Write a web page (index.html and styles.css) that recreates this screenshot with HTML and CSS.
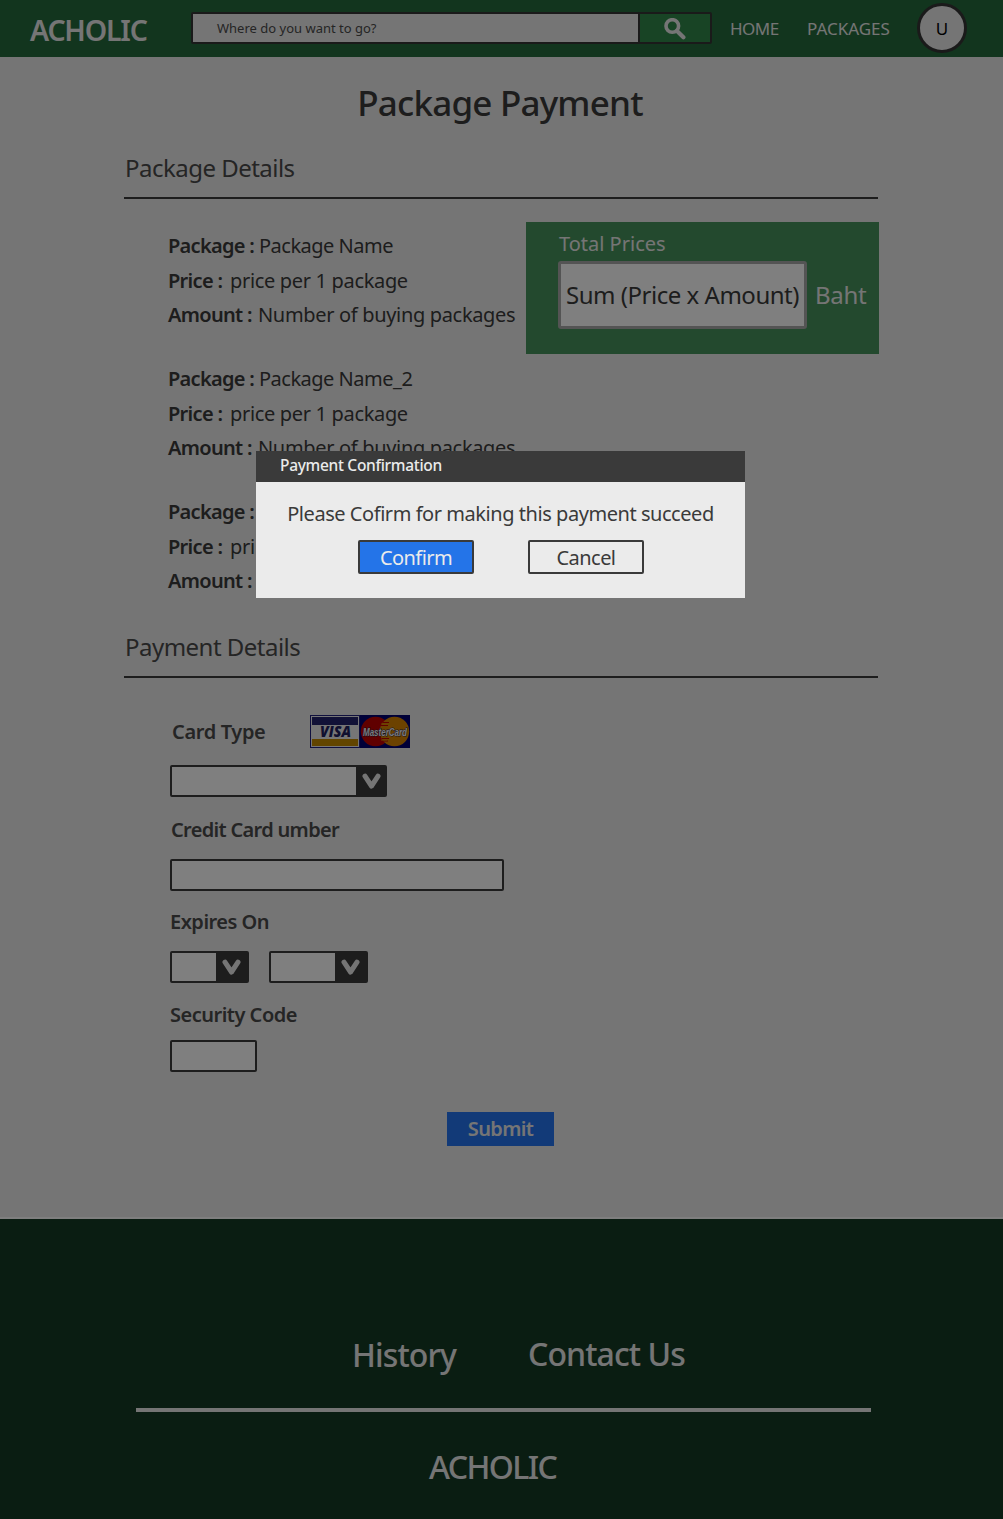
FILE: index.html
```html
<!DOCTYPE html>
<html lang="en">
<head>
<meta charset="utf-8">
<title>Package Payment</title>
<link rel="stylesheet" href="styles.css">
</head>
<body>
<header class="topbar">
  <div class="brand">ACHOLIC</div>
  <div class="search">
    <div class="search-input">Where do you want to go?</div>
    <div class="search-button">
      <svg width="22" height="22" viewBox="0 0 22 22"><circle cx="8.3" cy="8" r="6.3" fill="none" stroke="#ebebeb" stroke-width="3.6"/><path d="M13 13l6.4 6.2" stroke="#ebebeb" stroke-width="4.2" stroke-linecap="round"/></svg>
    </div>
  </div>
  <nav class="nav"><span class="nav-home">HOME</span><span class="nav-packages">PACKAGES</span></nav>
  <div class="avatar">U</div>
</header>

<main class="page">
  <h1 class="title">Package Payment</h1>
  <h2 class="section-title">Package Details</h2>
  <div class="summary">
    <div class="packages">
      <div class="package">
        <div class="line"><b class="k-package">Package :</b><span class="v-name">Package Name</span></div>
        <div class="line"><b class="k-price">Price :</b><span class="v-price">price per 1 package</span></div>
        <div class="line"><b class="k-amount">Amount :</b><span class="v-amount">Number of buying packages</span></div>
      </div>
      <div class="package">
        <div class="line"><b class="k-package">Package :</b><span class="v-name">Package Name_2</span></div>
        <div class="line"><b class="k-price">Price :</b><span class="v-price">price per 1 package</span></div>
        <div class="line"><b class="k-amount">Amount :</b><span class="v-amount">Number of buying packages</span></div>
      </div>
      <div class="package">
        <div class="line"><b class="k-package">Package :</b></div>
        <div class="line"><b class="k-price">Price :</b><span class="v-price">pri</span></div>
        <div class="line"><b class="k-amount">Amount :</b></div>
      </div>
    </div>
    <div class="total">
      <div class="total-label">Total Prices</div>
      <div class="total-row">
        <div class="total-box">Sum (Price x Amount)</div>
        <div class="total-unit">Baht</div>
      </div>
    </div>
  </div>

  <h2 class="section-title payment-title">Payment Details</h2>
  <div class="form">
    <div class="card-row">
      <span class="label card-label">Card Type</span>
      <svg class="cards" width="100" height="33" viewBox="0 0 100 33">
        <rect width="50" height="33" fill="#20207c"/>
        <rect x="1" y="1" width="48" height="31" fill="#ececec"/>
        <rect x="2" y="2" width="46" height="8" fill="#25256f"/>
        <rect x="2" y="24" width="46" height="7" fill="#c48a00"/>
        <text x="10" y="22" class="visa" textLength="31" lengthAdjust="spacingAndGlyphs">VISA</text>
        <rect x="50" width="50" height="33" fill="#000070"/>
        <circle cx="65.5" cy="16.5" r="14.7" fill="#c00000"/>
        <circle cx="84.5" cy="16.5" r="14.7" fill="#d88400"/>
        <path d="M73 7.500h6M71 10.500h7M72 23.500h7M73 26h5" stroke="#c00000" stroke-width="1.200"/>
        <path d="M71 9h6M71 25h6" stroke="#d88400" stroke-width="1"/>
        <text x="53" y="20.500" class="mc" textLength="44" lengthAdjust="spacingAndGlyphs">MasterCard</text>
      </svg>
    </div>
    <div class="select select-type"><span class="arrow"><svg width="19" height="17" viewBox="0 0 19 17"><path d="M3 3.200L9.500 13L16 3.200" fill="none" stroke="#ebebeb" stroke-width="5" stroke-linecap="round" stroke-linejoin="round"/></svg></span></div>
    <div class="label number-label">Credit Card umber</div>
    <div class="field field-number"></div>
    <div class="label expires-label">Expires On</div>
    <div class="expires">
      <div class="select select-month"><span class="arrow"><svg width="19" height="17" viewBox="0 0 19 17"><path d="M3 3.200L9.500 13L16 3.200" fill="none" stroke="#ebebeb" stroke-width="5" stroke-linecap="round" stroke-linejoin="round"/></svg></span></div>
      <div class="select select-year"><span class="arrow"><svg width="19" height="17" viewBox="0 0 19 17"><path d="M3 3.200L9.500 13L16 3.200" fill="none" stroke="#ebebeb" stroke-width="5" stroke-linecap="round" stroke-linejoin="round"/></svg></span></div>
    </div>
    <div class="label security-label">Security Code</div>
    <div class="field field-code"></div>
  </div>
  <div class="submit">Submit</div>
</main>

<footer class="footer">
  <div class="footer-links"><span class="history">History</span><span class="contact">Contact Us</span></div>
  <div class="footer-brand">ACHOLIC</div>
</footer>

<div class="overlay">
  <div class="modal">
    <div class="modal-title">Payment Confirmation</div>
    <div class="modal-text">Please Cofirm for making this payment succeed</div>
    <div class="modal-actions">
      <div class="btn btn-primary">Confirm</div>
      <div class="btn">Cancel</div>
    </div>
  </div>
</div>
</body>
</html>
```

FILE: styles.css
```css
* { box-sizing: border-box; }
body {
  margin: 0;
  width: 1003px;
  height: 1519px;
  overflow: hidden;
  background: #ebebeb;
  color: #3a3a3a;
  font-family: "Noto Sans", "Open Sans", sans-serif;
  font-size: 20px;
  white-space: nowrap;
}
.topbar {
  display: flex;
  height: 57px;
  padding-left: 30px;
  background: #246a3c;
  color: #ebebeb;
}
.brand {
  width: 161px;
  font-size: 28.5px;
  font-weight: 600;
  letter-spacing: -1.2px;
  line-height: 60px;
}
.search {
  display: flex;
  width: 521px;
  height: 32px;
  margin-top: 12px;
  border: 2px solid #343434;
  border-radius: 2px;
}
.search-input {
  width: 445px;
  padding-left: 24px;
  background: #ebebeb;
  color: #4a4a4a;
  font-size: 13px;
  line-height: 29px;
}
.search-button {
  flex: 1;
  padding: 4px 0 0 24px;
  border-left: 2px solid #343434;
  background: #30884a;
}
.search-button svg { display: block; }
.nav { display: flex; font-size: 17px; line-height: 58px; }
.nav-home { width: 77px; margin-left: 18px; letter-spacing: -0.5px; }
.nav-packages { width: 110px; }
.avatar {
  width: 50px;
  height: 50px;
  margin-top: 3px;
  border: 3px solid #343434;
  border-radius: 50%;
  background: #ebebeb;
  color: #000;
  font-size: 17px;
  line-height: 46px;
  text-align: center;
}

.page { height: 1160px; padding: 21px 124px 0; }
.title {
  margin: 0 3px 0 0;
  font-size: 35px;
  font-weight: 500;
  letter-spacing: -0.8px;
  line-height: 50px;
  text-align: center;
}
.section-title {
  width: 754px;
  height: 48px;
  margin: 23px 0 0;
  padding-left: 1px;
  border-bottom: 2px solid #3a3a3a;
  color: #4a4a4a;
  font-size: 24px;
  font-weight: 400;
  letter-spacing: -0.52px;
  line-height: 34px;
}
.summary { display: flex; height: 431px; }
.packages { width: 402px; padding: 30px 0 0 44px; }
.package { margin-bottom: 29.5px; }
.line { display: flex; height: 34.5px; line-height: 34.5px; letter-spacing: -0.33px; }
.line b { font-weight: 600; letter-spacing: -0.7px; }
.v-name { letter-spacing: -0.5px; }
.k-package { width: 91px; }
.k-price { width: 62px; }
.k-amount { width: 90px; }
.total {
  width: 353px;
  height: 132px;
  margin-top: 23px;
  padding: 5px 0 0 32px;
  background: #46925c;
  color: #ebebeb;
}
.total-label { height: 34px; padding-left: 1px; line-height: 33px; }
.total-row { display: flex; font-size: 24px; }
.total-box {
  width: 249px;
  height: 68px;
  border: 3px solid #a8a8a8;
  border-radius: 3px;
  background: #fff;
  color: #3a3a3a;
  letter-spacing: -0.48px;
  line-height: 61px;
  text-align: center;
}
.total-unit { margin-left: 8px; letter-spacing: -0.3px; line-height: 67px; }
.payment-title { margin-top: 0; }

.form { height: 434px; padding: 37px 0 0 46px; }
.card-row { display: flex; height: 33px; margin-bottom: 17px; }
.label {
  height: 28px;
  color: #4a4a4a;
  font-weight: 600;
  letter-spacing: -0.5px;
  line-height: 30px;
}
.card-label { width: 140px; padding-left: 2px; letter-spacing: -0.35px; line-height: 33px; }
.cards { display: block; overflow: visible; }
.visa { font: italic 800 16px "Open Sans", sans-serif; fill: #20205f; }
.mc {
  font: italic 700 11px "Liberation Sans", sans-serif;
  fill: #f4f4fa;
  stroke: #202040;
  stroke-width: 1px;
  paint-order: stroke;
}
.field, .select {
  height: 32px;
  border: 2px solid #3a3a3a;
  border-radius: 2px;
  background: #fff;
}
.select { display: flex; justify-content: flex-end; }
.arrow { width: 31px; padding: 6px 0 0 6px; background: #3a3a3a; }
.arrow svg { display: block; }
.select-type { width: 217px; }
.select-type .arrow { width: 29px; }
.number-label { margin: 18px 0 16px; padding-left: 1px; letter-spacing: -0.68px; }
.field-number { width: 334px; }
.expires-label { margin: 16px 0; }
.expires { display: flex; gap: 20px; }
.select-month { width: 79px; }
.select-year { width: 99px; }
.security-label { margin: 17px 0 12px; }
.field-code { width: 87px; }
.submit {
  width: 107px;
  height: 34px;
  margin-left: 323px;
  background: #2474f0;
  color: #ebebeb;
  font-weight: 600;
  letter-spacing: -0.65px;
  line-height: 34px;
  text-align: center;
}

.footer {
  height: 302px;
  padding: 113px 132px 0 136px;
  border-top: 2px solid #fff;
  background: #143a24;
  color: #ebebeb;
  font-size: 32px;
  font-weight: 500;
  line-height: 46px;
}
.footer-links {
  display: flex;
  height: 80px;
  border-bottom: 4px solid #ebebeb;
  letter-spacing: -0.9px;
}
.history { width: 176px; margin-left: 216px; }
.contact { line-height: 44px; }
.footer-brand { padding: 32px 0 0 293px; letter-spacing: -1.6px; }

.overlay {
  position: absolute;
  inset: 0 0 auto 0;
  width: 1003px;
  height: 1519px;
  padding: 451px 0 0 256px;
  background: rgba(0, 0, 0, 0.5);
}
.modal { width: 489px; height: 147px; background: #ebebeb; }
.modal-title {
  height: 31px;
  padding-left: 24px;
  background: #3a3a3a;
  color: #ebebeb;
  font-size: 15.5px;
  font-weight: 500;
  letter-spacing: -0.3px;
  line-height: 28px;
}
.modal-text { height: 58px; letter-spacing: -0.45px; line-height: 64px; text-align: center; }
.modal-actions { display: flex; gap: 54px; padding-left: 102px; }
.btn {
  width: 116px;
  height: 34px;
  border: 2px solid #3a3a3a;
  border-radius: 2px;
  letter-spacing: -0.55px;
  line-height: 31px;
  text-align: center;
}
.btn-primary { background: #2474e8; color: #ebebeb; }
```
